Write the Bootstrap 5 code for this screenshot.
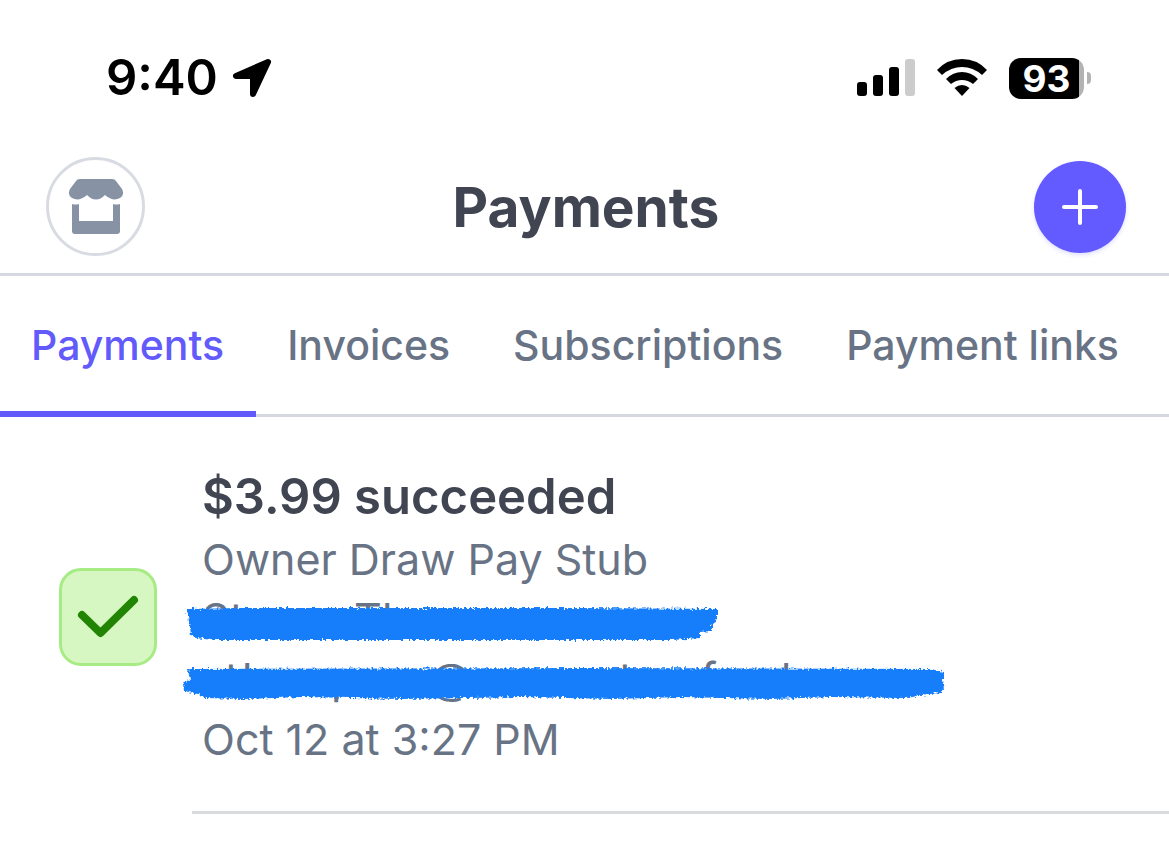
<!DOCTYPE html>
<html lang="en">
<head>
<meta charset="utf-8">
<meta name="viewport" content="width=device-width, initial-scale=1">
<title>Payments</title>
<link rel="stylesheet" href="https://cdn.jsdelivr.net/npm/bootstrap@5.3.0/dist/css/bootstrap.min.css">
<style>
  body { font-family: Inter, "Liberation Sans", sans-serif; color: #414552; background: #fff; }
  .status-bar { height: 145px; padding: 11px 78px 0 106px; color: #000; }
  .clock-group { gap: 14px; }
  .clock { font-size: 49px; line-height: 60px; font-weight: 600; }
  .wifi { margin: 0 22px; }
  .battery { width: 75px; height: 41px; border-radius: 12px; color: #fff; font-size: 37px; font-weight: 700; line-height: 41px; background: linear-gradient(to right, #000 70px, #b3b3b3 70px); }
  .battery-tip { width: 4px; height: 12px; margin-left: 3px; border-radius: 0 4px 4px 0; background: #b3b3b3; }
  .app-header { height: 131px; padding: 0 43px 5px 46px; border-bottom: 3px solid #d5d8df; }
  .app-header h1 { font-size: 55px; line-height: 64px; font-weight: 700; }
  .header-side { width: 99px; }
  .store-btn { width: 99px; height: 99px; border: 3px solid #d8dbe2; border-radius: 50%; background: #fff; }
  .add-btn { width: 92px; height: 92px; border: 0; border-radius: 50%; background: #635bff; box-shadow: 0 2px 4px #635bff33; }
  .tab-strip { height: 141px; box-shadow: inset 0 -3px #d5d8df; }
  .tab-strip .nav-link { padding: 0 32px 0 31px; font-size: 41px; line-height: 139px; height: 141px; font-weight: 500; color: #687385; white-space: nowrap; }
  .tab-strip .nav-link.active { color: #625afa; box-shadow: inset 0 -6px #625afa; }
  .payment-row { padding: 48px 0 45px 59px; gap: 45px; }
  .payment-row::after { content: ""; position: absolute; left: 192px; right: 0; bottom: 0; height: 3px; background: #d8dadb; }
  .state-icon { width: 98px; height: 98px; border: 3px solid #a6eb84; border-radius: 22px; background: #d7f7c2; }
  .amount { font-size: 49px; line-height: 64px; font-weight: 600; }
  .detail { font-size: 43px; line-height: 60px; color: #687385; }
  .hidden-line { height: 60px; }
  .hidden-line svg { left: -20px; top: 0; font-size: 43px; fill: #687385; overflow: visible; }
</style>
</head>
<body>
<div class="status-bar d-flex align-items-center justify-content-between">
  <div class="clock-group d-flex align-items-center">
    <span class="clock">9:40</span>
    <svg width="40" height="40" viewBox="0 0 40 40" aria-hidden="true"><path d="M36 4 4 18H21V36Z" fill="#000" stroke="#000" stroke-width="6" stroke-linejoin="round"/></svg>
  </div>
  <div class="d-flex align-items-center">
    <svg width="58" height="38" viewBox="0 0 58 38" aria-hidden="true"><rect x="0" y="23" width="10" height="14" rx="3"/><rect x="16" y="16" width="10" height="21" rx="3"/><rect x="32" y="8" width="10" height="29" rx="3"/><rect x="48" y="0" width="10" height="37" rx="3" fill="#ccc"/></svg>
    <svg class="wifi" width="50" height="38" viewBox="0 0 50 38" aria-hidden="true"><path d="M0 11Q10 0 25 0T50 11L45 16Q36 8 25 8T5 16ZM9 20Q16 13 25 13T41 20L36 25Q31 21 25 21T14 25ZM17.500 29Q21 26 25 26T32.500 29L25 37Z"/></svg>
    <div class="battery text-center">93</div><div class="battery-tip"></div>
  </div>
</div>
<header class="app-header d-flex align-items-center justify-content-between">
  <div class="header-side">
    <button type="button" class="store-btn p-0 d-flex align-items-center justify-content-center" aria-label="Switch store">
      <svg width="56" height="56" viewBox="0 0 56 56" fill="#8792a5" aria-hidden="true"><path d="M8 2Q9 0 12 0H44Q47 0 48 2L54 10Q57 16 52 19Q45 23 37 16Q28 25 19 16Q11 23 4 19Q-1 16 2 10ZM4 25Q8 26 11 25V42H45V25Q48 26 52 25V52Q52 55 49 55H7Q4 55 4 52Z"/></svg>
    </button>
  </div>
  <h1 class="m-0">Payments</h1>
  <div class="header-side d-flex justify-content-end">
    <button type="button" class="add-btn p-0 d-flex align-items-center justify-content-center" aria-label="Add payment">
      <svg width="36" height="36" viewBox="0 0 36 36" aria-hidden="true"><path d="M18 2V34M2 18H34" stroke="#fff" stroke-width="4" stroke-linecap="round"/></svg>
    </button>
  </div>
</header>
<nav class="tab-strip nav flex-nowrap overflow-hidden">
  <a class="nav-link active" href="#payments" aria-current="page">Payments</a>
  <a class="nav-link" href="#invoices">Invoices</a>
  <a class="nav-link" href="#subscriptions">Subscriptions</a>
  <a class="nav-link" href="#links">Payment links</a>
</nav>
<main>
  <article class="payment-row d-flex align-items-center position-relative">
    <div class="state-icon flex-shrink-0 d-flex align-items-center justify-content-center">
      <svg width="62" height="44" viewBox="0 0 62 44" fill="none" aria-hidden="true"><path d="M5 20 23.500 38 57 5" stroke="#228403" stroke-width="8" stroke-linecap="round" stroke-linejoin="round"/></svg>
    </div>
    <div class="flex-grow-1">
      <div class="amount">$3.99 succeeded</div>
      <div class="detail">Owner Draw Pay Stub</div>
      <div class="hidden-line position-relative">
        <svg class="position-absolute" width="764" height="60" viewBox="0 0 764 60" aria-hidden="true">
          <defs><filter id="rough" x="-2%" y="-20%" width="104%" height="140%"><feTurbulence type="fractalNoise" baseFrequency="0.4" numOctaves="2" seed="4"/><feDisplacementMap in="SourceGraphic" scale="6" xChannelSelector="R" yChannelSelector="G"/></filter></defs>
          <text x="20" y="45">S</text><text x="48" y="45">t</text><text x="172" y="45">T</text><text x="200" y="45">h</text>
          <path filter="url(#rough)" fill="#147efb" d="M5 20 60 19H400L535 20V31L530 35V42L518 43V49L490 51H30L15 49 9 46Z"/>
        </svg>
      </div>
      <div class="hidden-line position-relative">
        <svg class="position-absolute" width="764" height="60" viewBox="0 0 764 60" aria-hidden="true">
          <text x="43" y="45">t</text><text x="60" y="45">h</text><text x="149" y="45">p</text><text x="248" y="45">@</text><text x="437" y="45">t</text><text x="519" y="45">f</text><text x="583" y="45">d</text>
          <path filter="url(#rough)" fill="#147efb" d="M6 20 400 19 750 20 762 23V30L760 33 763 38 758 44 738 46 725 49 650 48 590 50 500 48 430 50 340 48 220 50 120 48 60 50 24 49 16 45 2 42 1 34 8 31Z"/>
        </svg>
      </div>
      <div class="detail">Oct 12 at 3:27 PM</div>
    </div>
  </article>
</main>
<script src="https://cdn.jsdelivr.net/npm/bootstrap@5.3.0/dist/js/bootstrap.bundle.min.js"></script>
</body>
</html>
